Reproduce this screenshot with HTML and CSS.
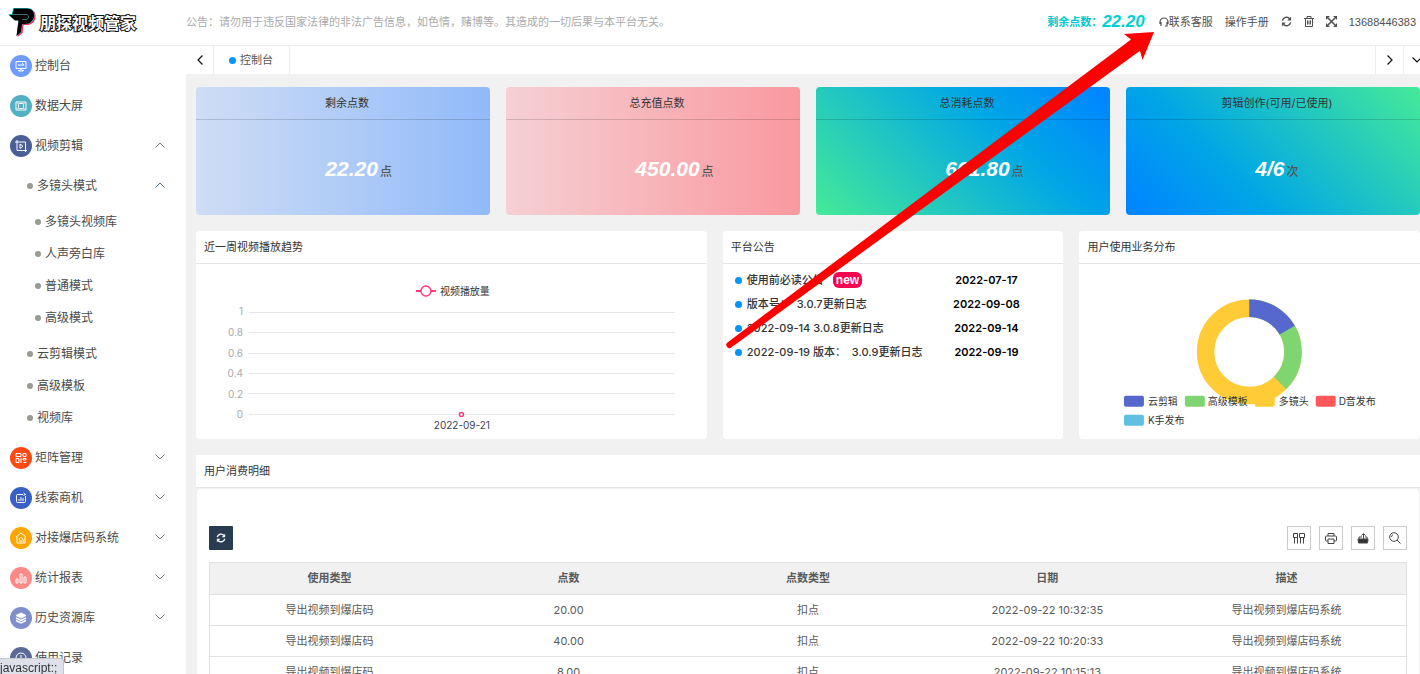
FILE: index.html
```html
<!DOCTYPE html>
<html lang="zh-CN">
<head>
<meta charset="utf-8">
<title>控制台</title>
<link rel="stylesheet" href="styles.css">
</head>
<body>
<svg class="defs" aria-hidden="true">
  <symbol id="chev" viewBox="0 0 12 8"><path d="M1.500 6.500L6 2l4.500 4.500" fill="none" stroke="currentColor"/></symbol>
  <symbol id="refresh" viewBox="0 0 12 12"><path d="M1.500 5A4.600 4.600 0 0 1 9.500 3M10.500 7a4.600 4.600 0 0 1-8 2" fill="none" stroke="currentColor" stroke-width="1.600"/><path d="M11 .800V5H6.800zM1 11.200V7h4.200z" fill="currentColor"/></symbol>
</svg>

<header class="topbar">
  <a class="brand" href="#">
    <svg class="brand-mark" viewBox="0 0 28 30" aria-hidden="true">
      <path d="M5 1h14c5 0 8 3 7.500 8s-4 8-9 8h-3l-1 8-5 4 2-16h9c2 0 3-1 3-3s-1-3-3-3H4L0 7h4z" fill="#f0284a" transform="translate(1 1)"/>
      <path d="M5 1h14c5 0 8 3 7.500 8s-4 8-9 8h-3l-1 8-5 4 2-16H6L0 7h4z" fill="#25d5dc"/>
      <path d="M6 1.500h13c5 0 7.500 3 7 7.500s-4 8-9 8h-3l-1 8-4.500 4 2-15.500H7L1 8h3z" fill="#000"/>
      <path d="M3 7.500h15c3.500 0 3.500 5 0 5h-4" fill="none" stroke="#4a8a90" stroke-width=".8"/>
    </svg>
    <span class="brand-name">朋探视频管家</span>
  </a>
  <p class="notice">公告：请勿用于违反国家法律的非法广告信息，如色情，赌博等。其造成的一切后果与本平台无关。</p>
  <nav class="tools">
    <span class="balance">剩余点数：<b class="lcd lcd-small">22.20</b></span>
    <a href="#"><svg width="10" height="10" viewBox="0 0 10 10" aria-hidden="true"><path d="M1 7V5a4 4 0 0 1 8 0v2M2 5v4M8 5v4H6" fill="none" stroke="currentColor" stroke-width="1.200"/></svg>联系客服</a>
    <a href="#">操作手册</a>
    <button class="icon" aria-label="刷新"><svg width="11" height="11"><use href="#refresh"/></svg></button>
    <button class="icon" aria-label="清除"><svg width="10" height="11" viewBox="0 0 10 11"><path d="M0 2.500h10M3 2.500v-2h4v2M1.500 2.500v8h7v-8M3.500 4.500v4M5 4.500v4M6.500 4.500v4" fill="none" stroke="currentColor"/></svg></button>
    <button class="icon" aria-label="全屏"><svg width="11" height="11" viewBox="0 0 11 11"><path d="M2 2l7 7M9 2L2 9" stroke="currentColor" stroke-width="1.600"/><path d="M0 0h4L0 4zM11 0v4L7 0zM0 11V7l4 4zM11 11H7l4-4z" fill="currentColor"/></svg></button>
    <a class="phone" href="#">13688446383</a>
  </nav>
</header>

<div class="shell">
  <nav class="side">
    <a class="item" href="#"><svg class="badge blue" viewBox="0 0 22 22"><path d="M6 6.500h10v7H6zM8 10h6M12 8l2 2M8 15.500h2l1-1.500 1 1.500h2M9 16h4"/></svg>控制台</a>
    <a class="item" href="#"><svg class="badge teal" viewBox="0 0 22 22"><path d="M6 7h10v8H6zM7.500 9l1-1M14.500 9l-1-1M7.500 13l1 1M14.500 13l-1 1"/><rect x="8.500" y="8.500" width="5" height="5" rx="1"/></svg>数据大屏</a>
    <a class="item" href="#"><svg class="badge navy" viewBox="0 0 22 22"><path d="M5 7h10.500v10M7 5v10.500h10M10 9l3 2.200-3 2.300z"/></svg>视频剪辑<svg class="chev"><use href="#chev"/></svg></a>
    <div class="sub">
      <a class="leaf" href="#">多镜头模式<svg class="chev active"><use href="#chev"/></svg></a>
      <div class="deep">
        <a class="leaf" href="#">多镜头视频库</a>
        <a class="leaf" href="#">人声旁白库</a>
        <a class="leaf" href="#">普通模式</a>
        <a class="leaf" href="#">高级模式</a>
      </div>
      <a class="leaf" href="#">云剪辑模式</a>
      <a class="leaf" href="#">高级模板</a>
      <a class="leaf" href="#">视频库</a>
    </div>
    <a class="item" href="#"><svg class="badge orange" viewBox="0 0 22 22"><path d="M6 6.500h5v3H6zM13 6.500h3v3h-3zM6 11.500h3v4H6zM11 11v5M13 11.500h3v1.500h-3zM13.500 15.500h3"/></svg>矩阵管理<svg class="chev down"><use href="#chev"/></svg></a>
    <a class="item" href="#"><svg class="badge royal" viewBox="0 0 22 22"><path d="M13 7.500H7.500a1 1 0 0 0-1 1v6a1 1 0 0 0 1 1h7a1 1 0 0 0 1-1V9M13.500 6l2 1.500-2 1M9 12v2M11 10v4M13 11v3"/></svg>线索商机<svg class="chev down"><use href="#chev"/></svg></a>
    <a class="item" href="#"><svg class="badge amber" viewBox="0 0 22 22"><path d="M6 10l5-4 5 4M7 10v6h8v-6M9 14h5M9 13c0-3 4-3 4 0"/></svg>对接爆店码系统<svg class="chev down"><use href="#chev"/></svg></a>
    <a class="item" href="#"><svg class="badge pink" viewBox="0 0 22 22"><path d="M6 12h2v4H6zM10 7h2v9h-2zM14 10h2v6h-2z"/></svg>统计报表<svg class="chev down"><use href="#chev"/></svg></a>
    <a class="item" href="#"><svg class="badge lilac" viewBox="0 0 22 22"><path d="M11 6l5 2.500-5 2.500-5-2.500z" fill="#fff"/><path d="M6 11l5 2.500 5-2.500M6 13.500l5 2.500 5-2.500" stroke-width="1.500"/></svg>历史资源库<svg class="chev down"><use href="#chev"/></svg></a>
    <a class="item" href="#"><svg class="badge slate" viewBox="0 0 22 22"><circle cx="11" cy="11" r="5"/><path d="M11 8v3.500h2"/></svg>使用记录</a>
  </nav>

  <main class="main">
    <div class="tabs">
      <button class="tab-btn" aria-label="向左"><svg width="8" height="12" viewBox="0 0 8 12"><path d="M6.500 1.500L2 6l4.500 4.500"/></svg></button>
      <a class="tab" href="#">控制台</a>
      <button class="tab-btn right" aria-label="向右"><svg width="8" height="12" viewBox="0 0 8 12"><path d="M1.500 1.500L6 6l-4.500 4.500"/></svg></button>
      <button class="tab-btn more" aria-label="更多"><svg width="12" height="8" viewBox="0 0 12 8"><path d="M1.500 1.500L6 6l4.500-4.500"/></svg></button>
    </div>

    <div class="content">
      <section class="cards">
        <article class="card c1"><h2>剩余点数</h2><p><b class="lcd">22.20</b>点</p></article>
        <article class="card c2"><h2>总充值点数</h2><p><b class="lcd">450.00</b>点</p></article>
        <article class="card c3"><h2>总消耗点数</h2><p><b class="lcd">601.80</b>点</p></article>
        <article class="card c4"><h2>剪辑创作(可用/已使用)</h2><p><b class="lcd">4/6</b>次</p></article>
      </section>

      <section class="panels">
        <article class="panel">
          <h2>近一周视频播放趋势</h2>
          <svg class="chart" viewBox="0 0 511 175">
            <g stroke="#e6e6eb"><path d="M53 48.500h426M53 68.500h426M53 89.500h426M53 109.500h426M53 129.500h426M53 150.500h426"/></g>
            <g class="axis"><text x="47" y="51">1</text><text x="47" y="72">0.8</text><text x="47" y="93">0.6</text><text x="47" y="113">0.4</text><text x="47" y="134">0.2</text><text x="47" y="154">0</text></g>
            <path d="M220 27h20" stroke="#ff3b7b" stroke-width="2"/><circle cx="230" cy="27" r="5" fill="#fff" stroke="#ff3b7b" stroke-width="1.500"/>
            <text class="legend" x="244" y="31">视频播放量</text>
            <circle cx="265.500" cy="150.500" r="2" fill="#fff" stroke="#ff3b7b" stroke-width="1.500"/>
            <text class="date" x="266" y="165">2022-09-21</text>
          </svg>
        </article>
        <article class="panel">
          <h2>平台公告</h2>
          <ul class="news">
            <li><a href="#">使用前必读公告<em>new</em></a><time>2022-07-17</time></li>
            <li><a href="#">版本号：&nbsp; 3.0.7更新日志</a><time>2022-09-08</time></li>
            <li><a href="#">2022-09-14 3.0.8更新日志</a><time>2022-09-14</time></li>
            <li><a href="#">2022-09-19 版本：&nbsp; 3.0.9更新日志</a><time>2022-09-19</time></li>
          </ul>
        </article>
        <article class="panel">
          <h2>用户使用业务分布</h2>
          <svg class="chart" viewBox="0 0 341 175">
            <g fill="none" stroke-width="17.500" transform="rotate(-90 170.500 88)">
              <circle cx="170.500" cy="88" r="43.750" stroke="#ffcb37"/>
              <circle cx="170.500" cy="88" r="43.750" stroke="#7fd56f" pathLength="1000" stroke-dasharray="376 624"/>
              <circle cx="170.500" cy="88" r="43.750" stroke="#5668cd" pathLength="1000" stroke-dasharray="167 833"/>
            </g>
            <rect x="45" y="132" width="20" height="11" rx="2" fill="#5668cd"/><text class="legend" x="69" y="141">云剪辑</text>
            <rect x="106" y="132" width="20" height="11" rx="2" fill="#7fd56f"/><text class="legend" x="129" y="141">高级模板</text>
            <rect x="176" y="132" width="20" height="11" rx="2" fill="#ffcb37"/><text class="legend" x="200" y="141">多镜头</text>
            <rect x="237" y="132" width="20" height="11" rx="2" fill="#ff585b"/><text class="legend" x="260" y="141">D音发布</text>
            <rect x="45" y="151" width="20" height="11" rx="2" fill="#60c0e2"/><text class="legend" x="69" y="160">K手发布</text>
          </svg>
        </article>
      </section>

      <section class="detail">
        <h2>用户消费明细</h2>
        <div class="detail-body">
          <div class="bar">
            <button class="reload" aria-label="刷新"><svg width="10" height="10"><use href="#refresh"/></svg></button>
            <button class="tool first" aria-label="筛选列"><svg width="12" height="12" viewBox="0 0 12 12"><path d="M.500 1.500h4v4h-4zM6.500 1.500h5v4h-5zM1.500 5.500v6M4.500 5.500v6M7.500 5.500v6M10.500 5.500v6"/></svg></button>
            <button class="tool" aria-label="打印"><svg width="12" height="12" viewBox="0 0 12 12"><path d="M3 4V1.500h6V4M3 9H1.500A1 1 0 0 1 .500 8V5a1 1 0 0 1 1-1h9a1 1 0 0 1 1 1v3a1 1 0 0 1-1 1H9M3 7h6v4.500H3z"/></svg></button>
            <button class="tool" aria-label="导出"><svg width="12" height="12" viewBox="0 0 12 12"><path d="M1 7h10l-.500 4h-9z" fill="#333"/><path d="M2 7V5h3M10 7V5H8M6.500 7V2M4.500 3.500l2-2 2 2"/></svg></button>
            <button class="tool" aria-label="搜索"><svg width="12" height="12" viewBox="0 0 12 12"><circle cx="5" cy="5" r="4.300"/><path d="M8 8l3.500 3.500M2.500 5A2.500 2.500 0 0 1 4 2.700"/></svg></button>
          </div>
          <table>
            <thead><tr><th>使用类型</th><th>点数</th><th>点数类型</th><th>日期</th><th>描述</th></tr></thead>
            <tbody>
              <tr><td>导出视频到爆店码</td><td>20.00</td><td>扣点</td><td>2022-09-22 10:32:35</td><td>导出视频到爆店码系统</td></tr>
              <tr><td>导出视频到爆店码</td><td>40.00</td><td>扣点</td><td>2022-09-22 10:20:33</td><td>导出视频到爆店码系统</td></tr>
              <tr><td>导出视频到爆店码</td><td>8.00</td><td>扣点</td><td>2022-09-22 10:15:13</td><td>导出视频到爆店码系统</td></tr>
            </tbody>
          </table>
        </div>
      </section>
    </div>
  </main>
</div>

<svg class="pointer" width="430" height="322" viewBox="726 30 430 322" aria-hidden="true"><path d="M727.500 342.500L1131 39.500 1124 34l30-2-11.500 28-2.500-9.300L731.500 347.300a3 3 0 0 1-4-4.800z" fill="#f00"/></svg>
<div class="status">javascript:;</div>
</body>
</html>
```

FILE: styles.css
```css
* { box-sizing: border-box; }
body {
  margin: 0;
  height: 100vh;
  overflow: hidden;
  display: flex;
  flex-direction: column;
  font: 11px/16px Inter, "Noto Sans CJK SC", sans-serif;
  color: #333;
  background: #fff;
}
h2, p, ul { margin: 0; padding: 0; }
h2 { font-size: 11px; font-weight: 400; }
a { color: inherit; text-decoration: none; }
button { font: inherit; color: inherit; background: none; border: 0; padding: 0; cursor: pointer; }
svg { flex: none; }
.defs { position: absolute; width: 0; height: 0; }

.topbar {
  flex: none;
  height: 46px;
  display: flex;
  align-items: center;
  padding-right: 4px;
  padding-bottom: 2px;
  border-bottom: 1px solid #eee;
}
.brand { width: 186px; flex: none; display: flex; align-items: center; gap: 4px; padding-left: 8px; }
.brand-mark { width: 28px; height: 30px; }
.brand-name {
  font: 700 16px/24px "Noto Sans CJK SC", sans-serif;
  color: #fff;
  -webkit-text-stroke: 2px #111;
  paint-order: stroke fill;
}
.notice { flex: 1; color: #aaa; white-space: nowrap; }
.tools { display: flex; align-items: center; gap: 12px; color: #505050; white-space: nowrap; }
.tools a { display: flex; align-items: center; }
.phone { font-family: "Liberation Sans", Arial, sans-serif; }
.icon { display: flex; }
.balance { display: flex; align-items: center; color: #00c8ce; font-weight: 700; }
.lcd { font: italic 700 21px/24px "Liberation Sans", Arial, sans-serif; color: #fff; margin-right: 2px; }
.lcd-small { font-size: 17px; color: #00d0d4; }

.shell { flex: 1; min-height: 0; display: flex; }
.side { width: 186px; flex: none; font-size: 12px; color: #4a4a4a; overflow: hidden; }
.item { height: 40px; display: flex; align-items: center; gap: 3px; padding: 0 20px 0 10px; }
.badge { width: 22px; height: 22px; border-radius: 50%; fill: none; stroke: #fff; stroke-width: 1; }
.blue { background: #6e9bff; }
.teal { background: #52b0c4; }
.navy { background: #4a5f96; }
.orange { background: #fb4b14; }
.royal { background: #3960c4; }
.amber { background: #ffa500; }
.pink { background: #ff8986; }
.lilac { background: #7f8fcb; }
.slate { background: #5c6a97; }
.chev { width: 12px; height: 8px; margin: 0 0 3px auto; color: #777; }
.active { color: #4a6a9a; }
.down { transform: rotate(180deg); }
.sub { padding: 4px 0; }
.deep { margin: 4px 0; }
.leaf { height: 32px; display: flex; align-items: center; padding: 0 20px 0 27px; }
.deep .leaf { padding-left: 35px; }
.leaf::before { content: ""; width: 6px; height: 6px; border-radius: 50%; background: #999b93; margin-right: 4px; }

.main { flex: 1; min-width: 0; background: #f1f1f1; overflow: hidden; }
.tabs { height: 28px; display: flex; background: #fff; }
.tab-btn { width: 28px; display: flex; align-items: center; justify-content: center; border-right: 1px solid #eee; }
.tab-btn svg { fill: none; stroke: #111; stroke-width: 1.2; }
.tab { display: flex; align-items: center; gap: 4px; padding: 0 16px 0 15px; border-right: 1px solid #eee; color: #555; }
.tab::before { content: ""; width: 7px; height: 7px; border-radius: 50%; background: #0096ff; }
.right { margin-left: auto; width: 29px; border-left: 1px solid #eee; }
.more { width: 16px; overflow: hidden; justify-content: flex-start; padding-left: 7px; border: 0; }

.content { padding: 13px 0 0 10px; display: flex; flex-direction: column; gap: 16px; }
.cards { display: grid; grid-template-columns: repeat(4, 1fr); gap: 16px; }
.card { height: 128px; border-radius: 4px; }
.card h2 { height: 33px; line-height: 32px; padding-left: 8px; text-align: center; border-bottom: 1px solid rgba(0, 0, 0, 0.15); }
.card p { padding: 37px 0 0 44%; font-size: 12px; color: #555; font-weight: 500; white-space: nowrap; }
.c1 { background: linear-gradient(90deg, #cfddf5, #91baf9); }
.c2 { background: linear-gradient(90deg, #f5d0d4, #f9999f); }
.c3 { background: linear-gradient(225deg, #0087ff 5%, #00a6e6 35%, #45ea98); }
.c4 { background: linear-gradient(45deg, #0087ff 5%, #00a6e6 35%, #45ea98); }

.panels { display: grid; grid-template-columns: 3fr 2fr 2fr; gap: 16px; }
.panel { background: #fff; border-radius: 4px; min-width: 0; }
.panel h2, .detail h2 { height: 33px; line-height: 32px; padding-left: 8px; border-bottom: 1px solid #e4e4e4; }
.chart { display: block; width: 100%; }
.chart text { font-size: 10px; fill: #333; }
.chart .axis text { fill: #aaa; text-anchor: end; }
.chart .date { fill: #3c4258; text-anchor: middle; }
.news { list-style: none; padding: 4px 0; }
.news li { height: 24px; display: grid; grid-template-columns: 1fr 118px; align-items: center; padding: 0 18px 0 12px; }
.news a { display: flex; align-items: center; white-space: nowrap; font-weight: 500; color: #333; }
.news a::before { content: ""; width: 7px; height: 7px; border-radius: 50%; background: #0096ff; margin-right: 5px; flex: none; }
.news em { font: 700 12px/16px "Liberation Sans", Arial, sans-serif; color: #fff; background: #ff0050; border-radius: 6px; padding: 0 3px; margin-left: 9px; }
.news time { text-align: center; font-weight: 600; color: #000; }

.detail h2 { background: #fff; }
.detail-body { background: #fff; margin: 1px 1px 0; padding: 37px 12px 0; border-radius: 4px; }
.bar { display: flex; gap: 8px; margin-bottom: 12px; }
.bar button { width: 24px; height: 24px; display: flex; align-items: center; justify-content: center; }
.reload { background: #283b51; color: #fff; border-radius: 1px; }
.tool { border: 1px solid #ccc; }
.tool svg { fill: none; stroke: #444; stroke-width: 1; }
.bar .first { margin-left: auto; }
table { width: 100%; table-layout: fixed; border-collapse: collapse; border: 1px solid #e2e2e2; color: #5a5a5a; }
th, td { height: 31px; padding: 0; text-align: center; border-bottom: 1px solid #e2e2e2; }
th { height: 32px; background: #f1f1f1; font-weight: 600; }

.pointer { position: absolute; left: 726px; top: 30px; pointer-events: none; }
.status {
  position: fixed;
  left: 0;
  bottom: 0;
  height: 16px;
  padding-right: 6px;
  font: 12px/18px "Liberation Sans", Arial, sans-serif;
  color: #333;
  background: #dee1ea;
  border: 1px solid #c4c6cc;
  border-width: 1px 1px 0 0;
  border-radius: 0 4px 0 0;
}
```
